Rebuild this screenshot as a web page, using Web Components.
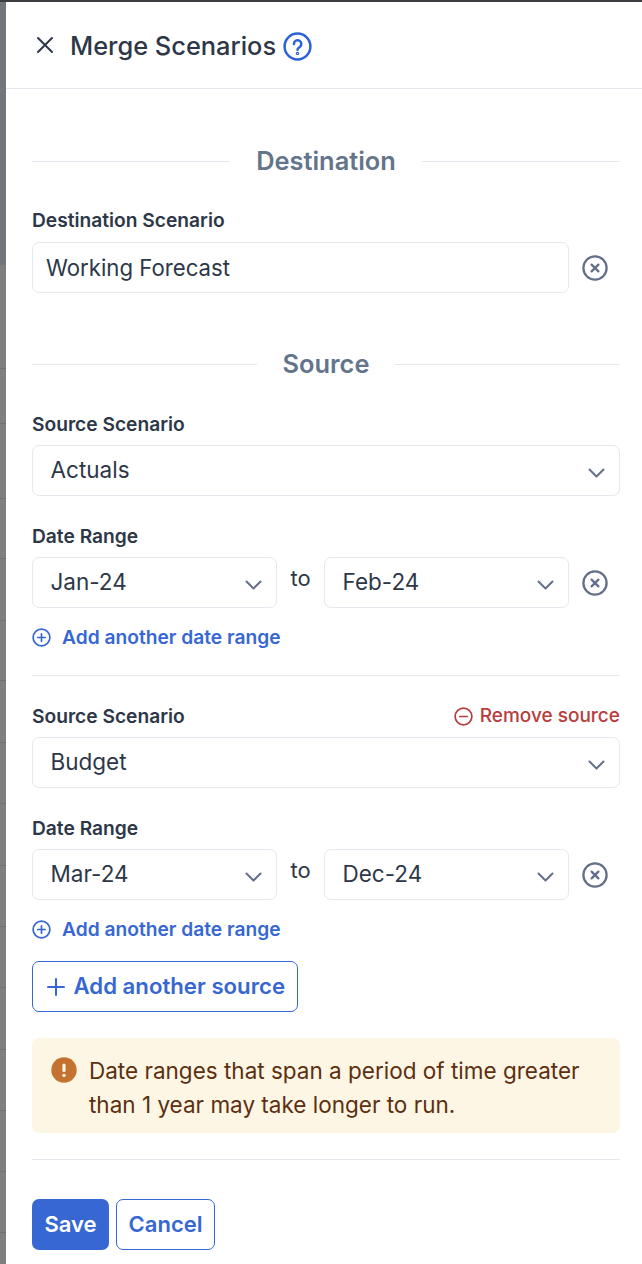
<!DOCTYPE html>
<html>
<head>
<meta charset="utf-8">
<title>Merge Scenarios</title>
<style>
  html, body { margin: 0; padding: 0; height: 100%; }
  body { font-family: Inter, "Liberation Sans", sans-serif; color: #2d3748; background: #fff; overflow: hidden; }
</style>
</head>
<body>
<merge-panel>
  <panel-header slot="header">Merge Scenarios</panel-header>
  <section-title style="margin-top:57px">Destination</section-title>
  <form-label style="margin-top:33px">Destination Scenario</form-label>
  <div style="display:flex;align-items:center;gap:13px;margin-top:9px;padding-right:12px;">
    <text-field style="flex:1">Working Forecast</text-field>
    <clear-button></clear-button>
  </div>
  <section-title style="margin-top:56px">Source</section-title>
  <source-block scenario="Actuals" from="Jan-24" to="Feb-24" style="margin-top:34px"></source-block>
  <hr-line style="margin-top:25px"></hr-line>
  <source-block scenario="Budget" from="Mar-24" to="Dec-24" removable style="margin-top:29px"></source-block>
  <outline-button icon style="margin-top:19px">Add another source</outline-button>
  <warning-note style="margin-top:26px">Date ranges that span a period of time greater than 1 year may take longer to run.</warning-note>
  <hr-line style="margin-top:26px"></hr-line>
  <div style="display:flex;gap:7px;margin-top:39px;">
    <solid-button>Save</solid-button>
    <outline-button>Cancel</outline-button>
  </div>
</merge-panel>

<script>
const CIRCLE_X = `<svg width="26" height="26" viewBox="0 0 26 26" fill="none" stroke="#64708a" stroke-linecap="round"><circle cx="13" cy="13" r="11.6" stroke-width="2.3"/><path d="M9.6 9.6l6.8 6.8M16.4 9.6l-6.8 6.8" stroke-width="2.3"/></svg>`;

// the page behind the drawer, only a sliver of it shows on the left
const ROW_LINES = [368, 423, 498, 558, 620, 680, 742, 803, 865, 926, 987, 1049, 1110, 1171, 1232];

class MergePanel extends HTMLElement {
  constructor() {
    super();
    const lines = ROW_LINES.map((y) => `linear-gradient(#6f6f6f, #6f6f6f) 0 ${y - 2}px / 100% 1px no-repeat`).join(", ");
    this.attachShadow({ mode: "open" }).innerHTML = `
    <style>
    :host { display: grid; grid-template-columns: 6px 1fr; grid-template-rows: 2px 1fr; width: 642px; height: 1264px; overflow: hidden; background: #fff; }
    .top { grid-column: 1 / 3; background: #3c3d40; }
    .strip { background: ${lines}, linear-gradient(#73767d, #73767d) 0 0 / 100% 263px no-repeat, #7f7f7f; }
    .sheet { background: #fff; min-width: 0; }
    .body { padding: 0 22px 0 26px; display: flex; flex-direction: column; }
    </style>
    <div class="top"></div>
    <div class="strip"></div>
    <div class="sheet">
      <slot name="header"></slot>
      <div class="body"><slot></slot></div>
    </div>`;
  }
}

class PanelHeader extends HTMLElement {
  constructor() {
    super();
    this.attachShadow({ mode: "open" }).innerHTML = `
    <style>
    :host { display: flex; align-items: center; height: 84px; padding-top: 2px; border-bottom: 1px solid #e6e8ef; padding-left: 29px; }
    .t { font-size: 25.4px; font-weight: 500; color: #2d3748; margin-left: 15px; line-height: 30px; }
    svg { display: block; flex: none; }
    .x { margin-top: -2px; }
    .help { margin-left: 7px; }
    </style>
    <svg class="x" width="20" height="20" viewBox="0 0 20 20" fill="none" stroke="#2d3748" stroke-width="2" stroke-linecap="round"><path d="M3 3l14 14M17 3L3 17"/></svg>
    <span class="t"><slot></slot></span>
    <svg class="help" width="29" height="29" viewBox="0 0 29 29" fill="none" stroke="#2b62d9" stroke-linecap="round" stroke-linejoin="round"><circle cx="14.5" cy="14.5" r="12.9" stroke-width="2.5"/><path d="M10.9 11.9a3.7 3.7 0 1 1 5.9 3c-1.4 1-2.3 1.5-2.3 2.8" stroke-width="2.5"/><circle cx="14.5" cy="21.4" r=".6" stroke-width="2.2"/></svg>`;
  }
}

class SectionTitle extends HTMLElement {
  constructor() {
    super();
    this.attachShadow({ mode: "open" }).innerHTML = `
    <style>
    :host { display: flex; align-items: center; gap: 26px; font-size: 25.4px; font-weight: 600; color: #64748b; line-height: 30px; }
    i { flex: 1; height: 1px; background: #e6e8ef; }
    </style>
    <i></i><span><slot></slot></span><i></i>`;
  }
}

class FormLabel extends HTMLElement {
  constructor() {
    super();
    this.attachShadow({ mode: "open" }).innerHTML = `
    <style>
    :host { display: flex; justify-content: space-between; align-items: center; height: 24px; padding-bottom: 2px; box-sizing: border-box; font-size: 19.2px; font-weight: 600; color: #2d3748; line-height: 22px; }
    </style>
    <slot></slot>`;
  }
}

class TextField extends HTMLElement {
  constructor() {
    super();
    this.attachShadow({ mode: "open" }).innerHTML = `
    <style>
    :host { display: flex; align-items: center; height: 51px; box-sizing: border-box; padding: 0 13px; border: 1px solid #e6e8ef; border-radius: 7px; background: #fff; font-size: 22.2px; color: #2d3748; }
    </style>
    <slot></slot>`;
  }
}

class SelectField extends HTMLElement {
  constructor() {
    super();
    this.attachShadow({ mode: "open" }).innerHTML = `
    <style>
    :host { display: flex; align-items: center; justify-content: space-between; height: 51px; box-sizing: border-box; padding: 0 14px 2px 17.5px; border: 1px solid #e6e8ef; border-radius: 7px; background: #fff; font-size: 22.5px; color: #2d3748; }
    svg { margin-top: 6px; }
    </style>
    <span><slot></slot></span>
    <svg width="17" height="10" viewBox="0 0 17 10" fill="none" stroke="#64708a" stroke-width="2" stroke-linecap="round" stroke-linejoin="round"><path d="M1.5 1.5l7 7 7-7"/></svg>`;
  }
}

class ClearButton extends HTMLElement {
  constructor() {
    super();
    this.attachShadow({ mode: "open" }).innerHTML = `
    <style>:host { display: block; width: 26px; height: 26px; flex: none; } svg { display: block; }</style>
    ${CIRCLE_X}`;
  }
}

class AddLink extends HTMLElement {
  constructor() {
    super();
    this.attachShadow({ mode: "open" }).innerHTML = `
    <style>
    :host { display: flex; align-items: center; gap: 11px; height: 24px; padding-bottom: 2px; box-sizing: border-box; font-size: 19.2px; font-weight: 600; color: #3767d2; line-height: 22px; }
    </style>
    <svg width="19" height="19" viewBox="0 0 19 19" fill="none" stroke="#3767d2" stroke-width="1.7" stroke-linecap="round"><circle cx="9.5" cy="9.5" r="8.4"/><path d="M9.5 5.8v7.4M5.8 9.5h7.4"/></svg>
    <span><slot></slot></span>`;
  }
}

class SourceBlock extends HTMLElement {
  constructor() {
    super();
    const removable = this.hasAttribute("removable");
    this.attachShadow({ mode: "open" }).innerHTML = `
    <style>
    :host { display: block; }
    .rm { display: flex; align-items: center; gap: 7px; font-size: 19px; font-weight: 500; color: #b83d3d; }
    .range { display: flex; align-items: center; margin-top: 8px; }
    select-field.d { width: 245px; flex: none; }
    .to { width: 47px; text-align: center; font-size: 22px; color: #2d3748; margin-top: -9px; }
    clear-button { margin-left: 13px; }
    </style>
    <form-label>Source Scenario${removable ? `<span class="rm"><svg width="19" height="19" viewBox="0 0 19 19" fill="none" stroke="#b83d3d" stroke-width="1.7" stroke-linecap="round"><circle cx="9.5" cy="9.5" r="8.4"/><path d="M5.8 9.5h7.4"/></svg>Remove source</span>` : ""}</form-label>
    <select-field style="margin-top:8px">${this.getAttribute("scenario")}</select-field>
    <form-label style="margin-top:29px">Date Range</form-label>
    <div class="range">
      <select-field class="d">${this.getAttribute("from")}</select-field>
      <span class="to">to</span>
      <select-field class="d">${this.getAttribute("to")}</select-field>
      <clear-button></clear-button>
    </div>
    <add-link style="margin-top:18px">Add another date range</add-link>`;
  }
}

class HrLine extends HTMLElement {
  constructor() {
    super();
    this.attachShadow({ mode: "open" }).innerHTML = `
    <style>:host { display: block; height: 1px; background: #e6e8ef; }</style>`;
  }
}

class OutlineButton extends HTMLElement {
  constructor() {
    super();
    const icon = this.hasAttribute("icon");
    this.attachShadow({ mode: "open" }).innerHTML = `
    <style>
    :host { display: inline-flex; align-self: flex-start; align-items: center; gap: 9px; height: 51px; box-sizing: border-box; padding: 0 11.5px 2px ${icon ? 13.5 : 11.5}px; border: 1.5px solid #3767d2; border-radius: 7px; background: #fff; font-size: ${icon ? 22.2 : 22}px; font-weight: 600; color: #3767d2; }
    svg { margin-top: 2px; }
    </style>
    ${icon ? `<svg width="18" height="18" viewBox="0 0 18 18" fill="none" stroke="#3767d2" stroke-width="2" stroke-linecap="round"><path d="M9 1v16M1 9h16"/></svg>` : ""}
    <span><slot></slot></span>`;
  }
}

class SolidButton extends HTMLElement {
  constructor() {
    super();
    this.attachShadow({ mode: "open" }).innerHTML = `
    <style>
    :host { display: inline-flex; align-items: center; height: 51px; box-sizing: border-box; padding: 0 12.5px 2px; border-radius: 7px; background: #3767d2; font-size: 22px; font-weight: 600; color: #fff; }
    </style>
    <slot></slot>`;
  }
}

class WarningNote extends HTMLElement {
  constructor() {
    super();
    this.attachShadow({ mode: "open" }).innerHTML = `
    <style>
    :host { display: flex; gap: 12px; padding: 16px 18px 11px 19px; border-radius: 7px; background: #fdf6e5; font-size: 22.5px; line-height: 34px; color: #5c2f10; }
    svg { flex: none; margin-top: 3px; }
    </style>
    <svg width="26" height="26" viewBox="0 0 26 26"><circle cx="13" cy="13" r="12.7" fill="#c4722f"/><rect x="11.4" y="6.4" width="3.2" height="8.6" rx="1.6" fill="#fdf6e5"/><circle cx="13" cy="18.4" r="1.7" fill="#fdf6e5"/></svg>
    <span><slot></slot></span>`;
  }
}

customElements.define("merge-panel", MergePanel);
customElements.define("panel-header", PanelHeader);
customElements.define("section-title", SectionTitle);
customElements.define("form-label", FormLabel);
customElements.define("text-field", TextField);
customElements.define("select-field", SelectField);
customElements.define("clear-button", ClearButton);
customElements.define("add-link", AddLink);
customElements.define("source-block", SourceBlock);
customElements.define("hr-line", HrLine);
customElements.define("outline-button", OutlineButton);
customElements.define("solid-button", SolidButton);
customElements.define("warning-note", WarningNote);
</script>
</body>
</html>
